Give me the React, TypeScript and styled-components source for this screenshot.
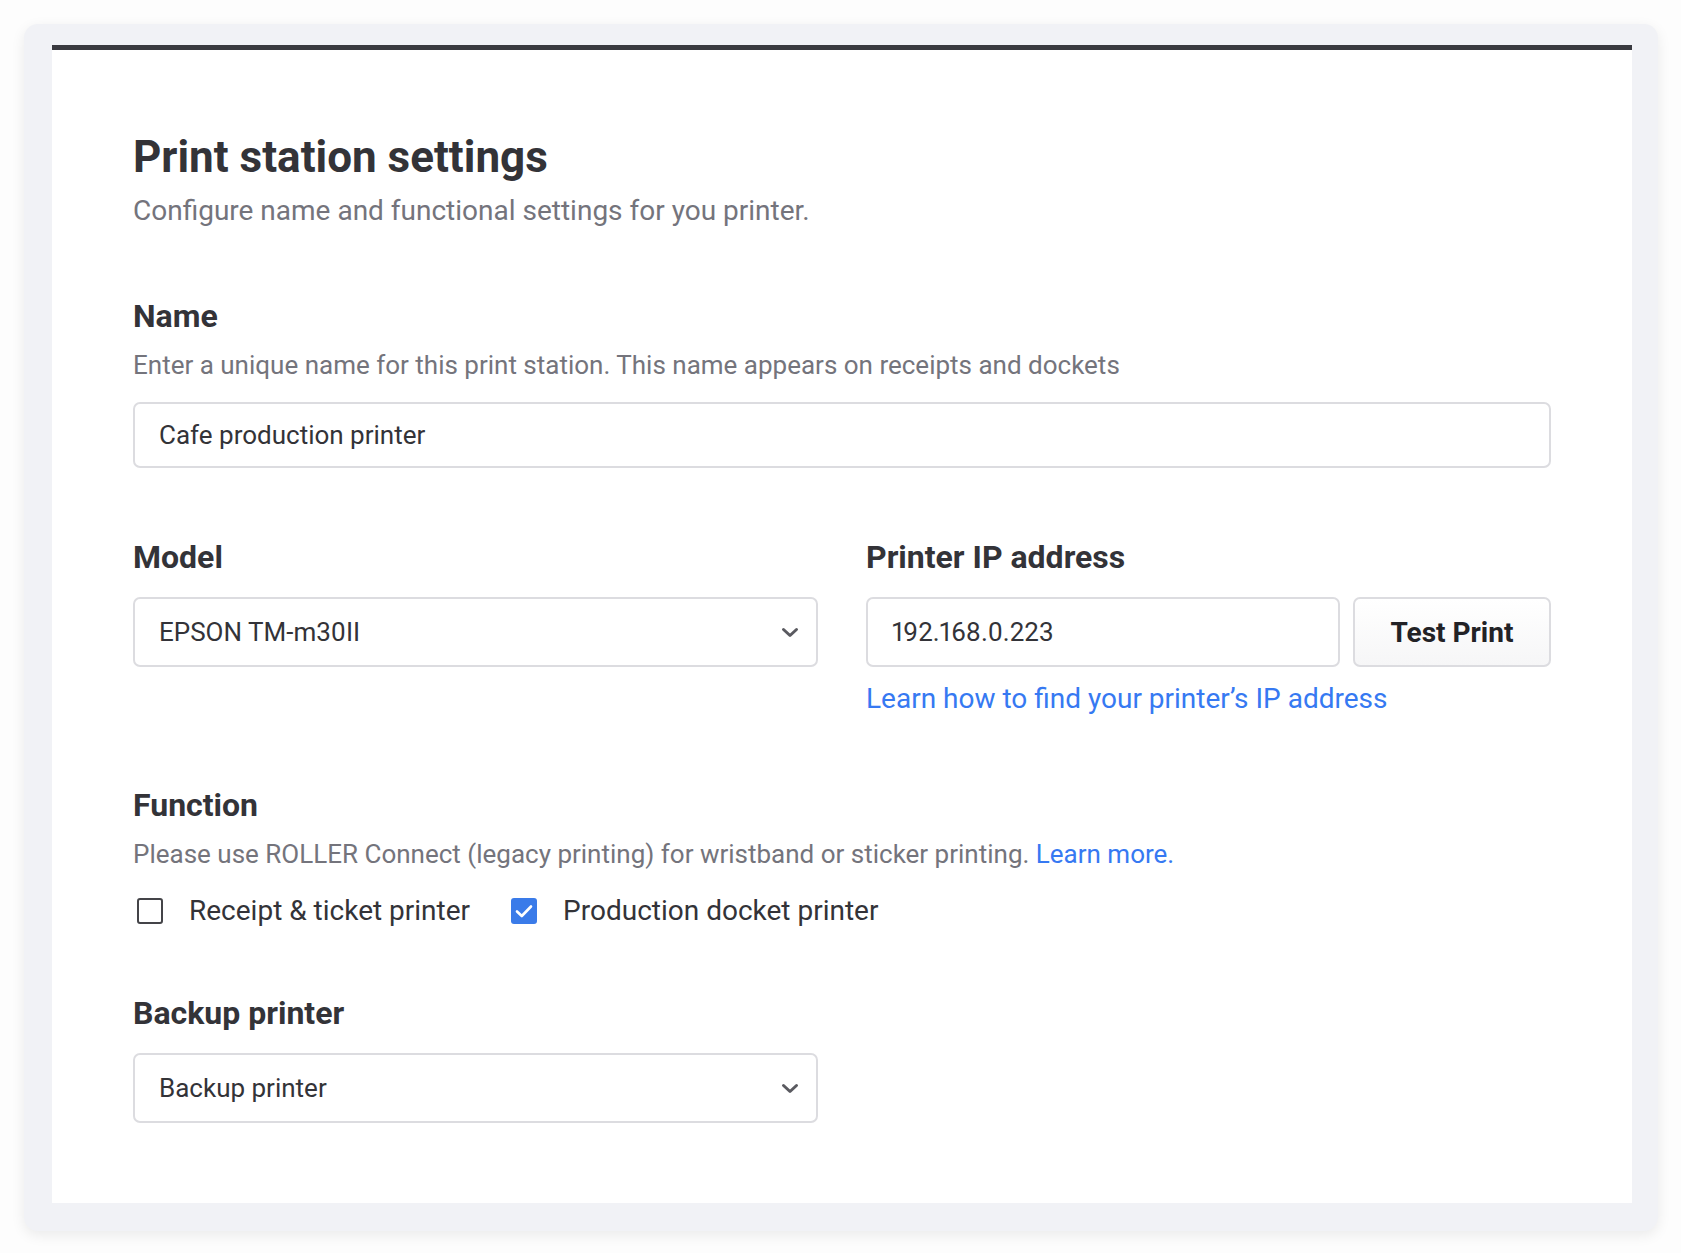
import React, { useState } from 'react';
import styled, { createGlobalStyle } from 'styled-components';

const GlobalStyle = createGlobalStyle`
  html, body {
    margin: 0;
    padding: 0;
    background: #fdfdfd;
  }
  body {
    font-family: Roboto, 'Liberation Sans', sans-serif;
    color: #333338;
  }
  * {
    box-sizing: border-box;
  }
`;

const Page = styled.div`
  padding: 24px 23px 23px 24px;
`;

const Frame = styled.div`
  background: #f1f2f6;
  border-radius: 14px;
  padding: 21px 26px 28px 28px;
  box-shadow: 0 4px 14px rgba(0, 0, 0, 0.08);
`;

const Card = styled.div`
  background: #ffffff;
  border-top: 5px solid #3a3a40;
  padding: 81px 81px 80px 81px;
`;

const Title = styled.h1`
  margin: 0;
  font-size: 44px;
  line-height: 52px;
  font-weight: 700;
  color: #333338;
`;

const Subtitle = styled.p`
  margin: 10px 0 0;
  font-size: 28px;
  line-height: 36px;
  color: #74747c;
`;

const Section = styled.section<{ $gap?: number }>`
  margin-top: ${(p) => p.$gap ?? 68}px;
`;

const Label = styled.h2`
  margin: 0;
  font-size: 32px;
  line-height: 40px;
  font-weight: 700;
  color: #333338;
`;

const Hint = styled.p`
  margin: 12px 0 0;
  font-size: 26px;
  line-height: 34px;
  color: #74747c;
`;

const Link = styled.a`
  color: #3679f2;
  text-decoration: none;
  cursor: pointer;
`;

const Field = styled.div<{ $height?: number }>`
  height: ${(p) => p.$height ?? 70}px;
  border: 2px solid #dcdce0;
  border-radius: 7px;
  background: #fff;
  display: flex;
  align-items: center;
  padding: 0 17px 0 24px;
  font-size: 26px;
  color: #333338;
  flex: 1;
  font-variant-numeric: proportional-nums;
`;

const SelectField = styled(Field)`
  justify-content: space-between;
  cursor: pointer;
`;

const Columns = styled.div`
  display: grid;
  grid-template-columns: 1fr 1fr;
  column-gap: 48px;
`;

const InputRow = styled.div<{ $top?: number }>`
  display: flex;
  gap: 13px;
  margin-top: ${(p) => p.$top ?? 20}px;
`;

const Button = styled.button`
  width: 198px;
  height: 70px;
  border: 2px solid #dcdce0;
  border-radius: 7px;
  background: linear-gradient(#ffffff, #f6f6f7);
  font-family: Roboto, 'Liberation Sans', sans-serif;
  font-size: 28px;
  font-weight: 700;
  color: #222226;
  cursor: pointer;
`;

const HelpLink = styled(Link)`
  display: block;
  margin-top: 14px;
  font-size: 28px;
  line-height: 36px;
`;

const CheckRow = styled.div`
  display: flex;
  gap: 37px;
  margin-top: 22px;
`;

const CheckItem = styled.label`
  display: flex;
  align-items: center;
  gap: 26px;
  font-size: 28px;
  line-height: 36px;
  color: #333338;
  cursor: pointer;
  padding-left: 4px;
`;

const Box = styled.span<{ $checked: boolean }>`
  width: 26px;
  height: 26px;
  border-radius: 3px;
  display: flex;
  align-items: center;
  justify-content: center;
  border: ${(p) => (p.$checked ? 'none' : '2.5px solid #444448')};
  background: ${(p) => (p.$checked ? '#3a7be9' : '#fff')};
`;

const Chevron = () => (
  <svg width="18" height="11" viewBox="0 0 18 11" fill="none">
    <path d="M2.5 2.5 L9 8.5 L15.5 2.5" stroke="#5a5a60" strokeWidth="3" strokeLinecap="round" strokeLinejoin="round" />
  </svg>
);

const Check = () => (
  <svg width="18" height="14" viewBox="0 0 18 14" fill="none">
    <path d="M2 7.5 L6.8 12 L16 2.5" stroke="#fff" strokeWidth="2.6" strokeLinecap="round" strokeLinejoin="round" />
  </svg>
);

const App: React.FC = () => {
  const [receipt, setReceipt] = useState(false);
  const [docket, setDocket] = useState(true);

  return (
    <>
      <GlobalStyle />
      <Page>
        <Frame>
          <Card>
            <Title>Print station settings</Title>
            <Subtitle>Configure name and functional settings for you printer.</Subtitle>

            <Section $gap={67}>
              <Label>Name</Label>
              <Hint>Enter a unique name for this print station. This name appears on receipts and dockets</Hint>
              <InputRow>
                <Field $height={66}>Cafe production printer</Field>
              </InputRow>
            </Section>

            <Section $gap={69}>
              <Columns>
                <div>
                  <Label>Model</Label>
                  <InputRow>
                    <SelectField>
                      EPSON TM-m30II
                      <Chevron />
                    </SelectField>
                  </InputRow>
                </div>
                <div>
                  <Label>Printer IP address</Label>
                  <InputRow>
                    <Field>192.168.0.223</Field>
                    <Button>Test Print</Button>
                  </InputRow>
                  <HelpLink>Learn how to find your printer’s IP address</HelpLink>
                </div>
              </Columns>
            </Section>

            <Section $gap={68}>
              <Label>Function</Label>
              <Hint>
                Please use ROLLER Connect (legacy printing) for wristband or sticker printing. <Link>Learn more.</Link>
              </Hint>
              <CheckRow>
                <CheckItem onClick={() => setReceipt(!receipt)}>
                  <Box $checked={receipt}>{receipt && <Check />}</Box>
                  Receipt &amp; ticket printer
                </CheckItem>
                <CheckItem onClick={() => setDocket(!docket)}>
                  <Box $checked={docket}>{docket && <Check />}</Box>
                  Production docket printer
                </CheckItem>
              </CheckRow>
            </Section>

            <Section $gap={64}>
              <Label>Backup printer</Label>
              <Columns>
                <InputRow>
                  <SelectField>
                    Backup printer
                    <Chevron />
                  </SelectField>
                </InputRow>
              </Columns>
            </Section>
          </Card>
        </Frame>
      </Page>
    </>
  );
};

export default App;
